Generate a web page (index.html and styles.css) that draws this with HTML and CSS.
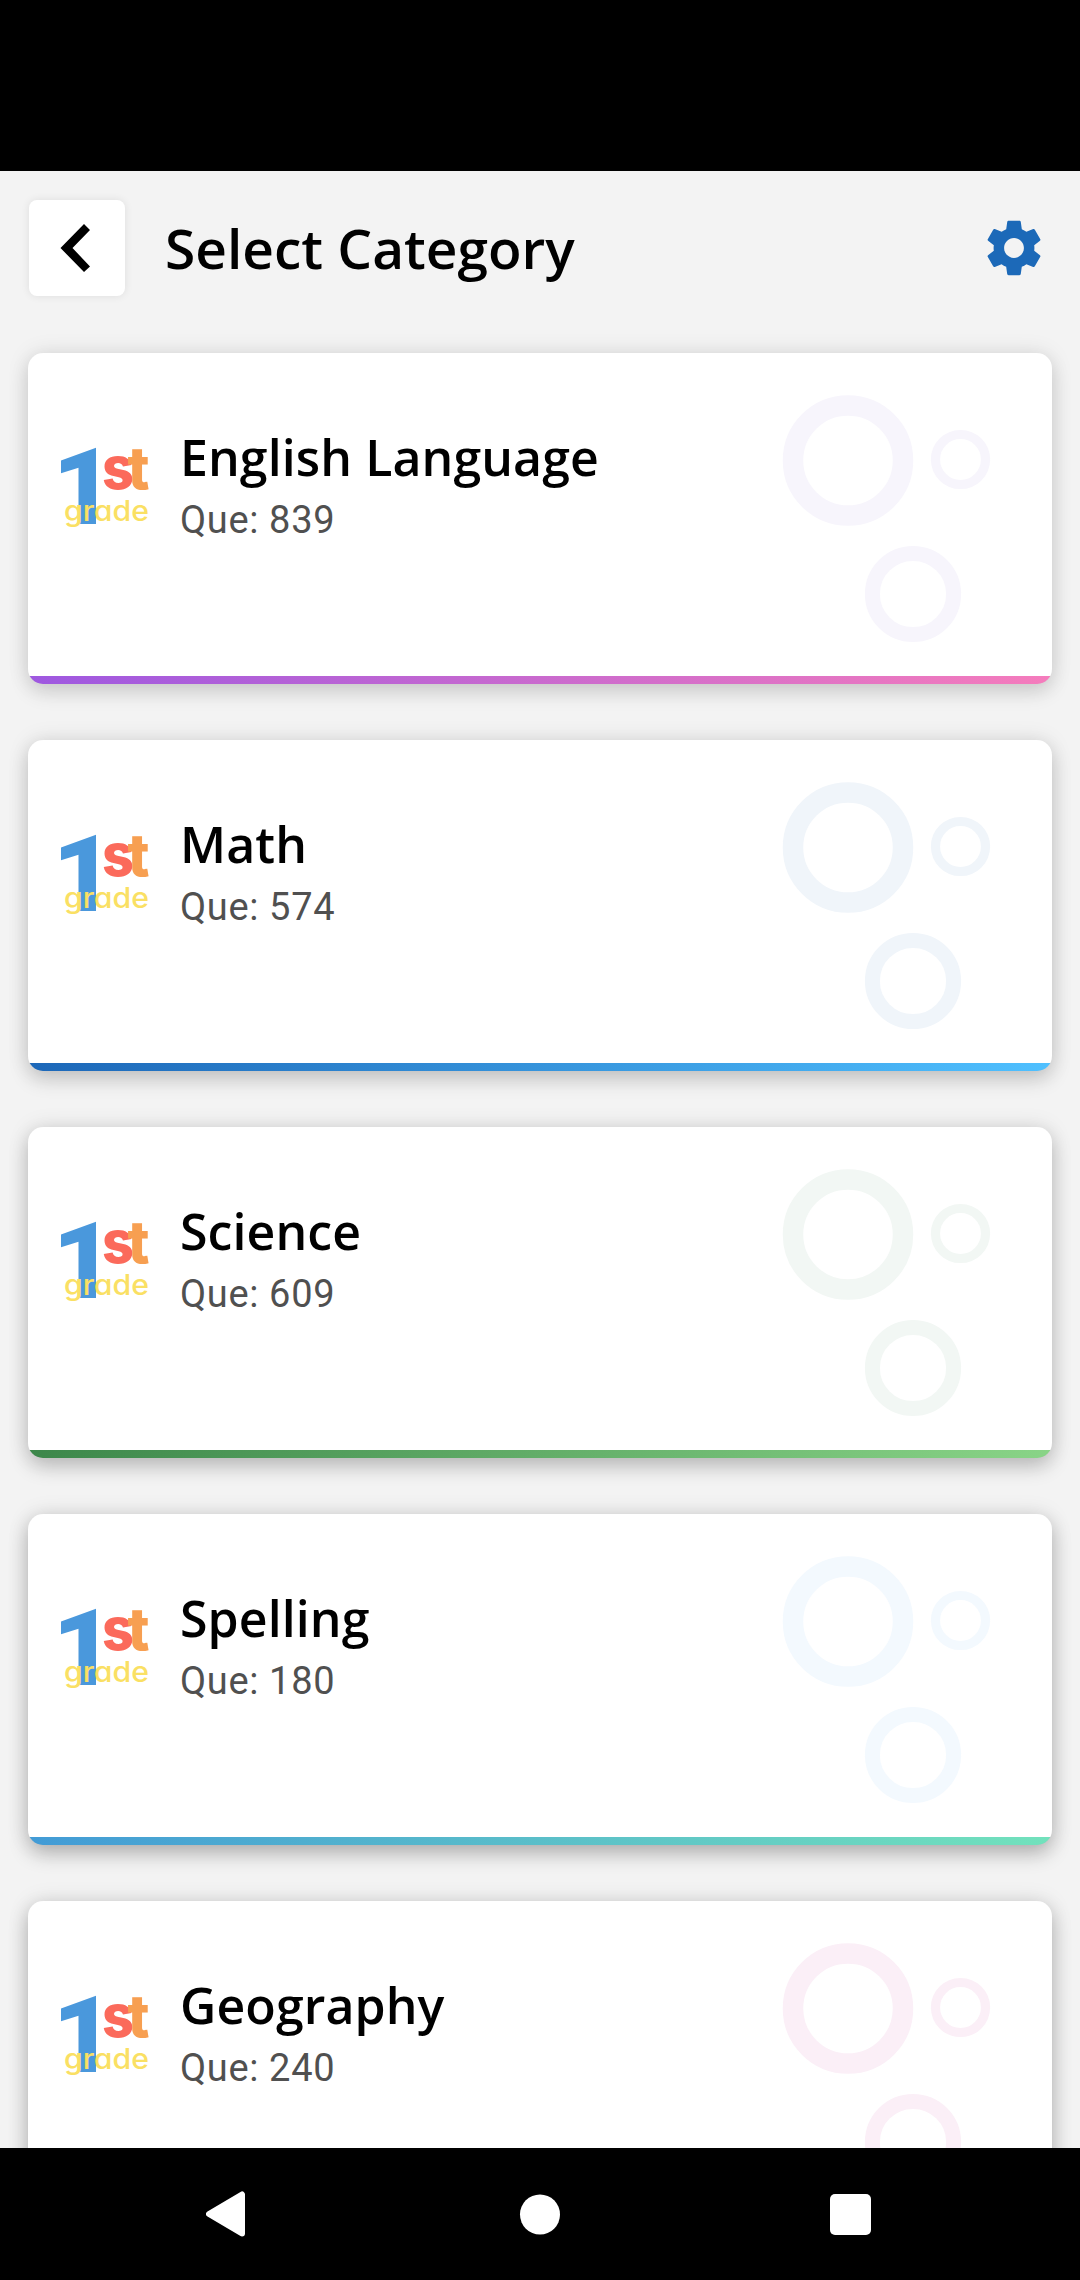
FILE: index.html
```html
<!DOCTYPE html>
<html lang="en">
<head>
<meta charset="utf-8">
<title>Select Category</title>
<link rel="stylesheet" href="styles.css">
</head>
<body>
<svg width="0" height="0" class="defs">
  <symbol id="rings" viewBox="0 0 210 250">
    <g fill="none" stroke="currentColor">
      <circle cx="66" cy="65.500" r="55" stroke-width="20.500"/>
      <circle cx="178.500" cy="64.500" r="25" stroke-width="9.200"/>
      <circle cx="131" cy="199" r="40.600" stroke-width="15"/>
    </g>
  </symbol>
</svg>
<div class="screen">
  <div class="status"></div>
  <header class="bar">
    <div class="back"><svg width="30" height="48" viewBox="0 0 30 48"><path d="M24 0 30 6 12.500 24 30 42.500 24 48 .5 24Z"/></svg></div>
    <h1>Select Category</h1>
    <svg class="gear" width="68" height="68" viewBox="0 0 24 24"><path fill="#1c69b8" d="M19.140 12.940c.04-.3.06-.61.06-.94 0-.32-.02-.64-.07-.94l2.030-1.580c.18-.14.23-.41.12-.61l-1.920-3.320c-.12-.22-.37-.29-.59-.22l-2.390.96c-.5-.38-1.030-.7-1.620-.94l-.36-2.540c-.04-.24-.24-.41-.48-.41h-3.840c-.24 0-.43.17-.47.41l-.36 2.540c-.59.24-1.130.57-1.620.94l-2.390-.96c-.22-.08-.47 0-.59.22L2.740 8.870c-.12.21-.08.47.12.61l2.030 1.580c-.05.3-.09.63-.09.94s.02.64.07.94l-2.030 1.580c-.18.14-.23.41-.12.61l1.920 3.320c.12.22.37.29.59.22l2.390-.96c.5.38 1.030.7 1.620.94l.36 2.540c.05.24.24.41.48.41h3.840c.24 0 .44-.17.47-.41l.36-2.540c.59-.24 1.130-.56 1.620-.94l2.390.96c.22.08.47 0 .59-.22l1.920-3.320c.12-.22.07-.47-.12-.61l-2.010-1.580zM12 15.500c-1.930 0-3.500-1.570-3.500-3.500s1.570-3.500 3.500-3.500 3.500 1.570 3.500 3.500-1.570 3.500-3.500 3.500z"/></svg>
  </header>
  <main class="list">
    <section class="card purple">
      <svg class="logo" viewBox="0 0 96 86"><path d="M4 15.500 39 2.700V79H21.500V22.800L4 28.200Z"/><text x="45" y="43.500" class="logo-s" textLength="32" lengthAdjust="spacingAndGlyphs">s</text><text x="70.500" y="43.500" class="logo-t" textLength="22" lengthAdjust="spacingAndGlyphs">t</text><text x="7" y="75.500" class="logo-grade" textLength="85" lengthAdjust="spacingAndGlyphs">grade</text></svg>
      <div class="info"><h2>English Language</h2><p>Que: 839</p></div>
      <svg class="rings"><use href="#rings"/></svg>
    </section>
    <section class="card blue">
      <svg class="logo" viewBox="0 0 96 86"><path d="M4 15.500 39 2.700V79H21.500V22.800L4 28.200Z"/><text x="45" y="43.500" class="logo-s" textLength="32" lengthAdjust="spacingAndGlyphs">s</text><text x="70.500" y="43.500" class="logo-t" textLength="22" lengthAdjust="spacingAndGlyphs">t</text><text x="7" y="75.500" class="logo-grade" textLength="85" lengthAdjust="spacingAndGlyphs">grade</text></svg>
      <div class="info"><h2>Math</h2><p>Que: 574</p></div>
      <svg class="rings"><use href="#rings"/></svg>
    </section>
    <section class="card green">
      <svg class="logo" viewBox="0 0 96 86"><path d="M4 15.500 39 2.700V79H21.500V22.800L4 28.200Z"/><text x="45" y="43.500" class="logo-s" textLength="32" lengthAdjust="spacingAndGlyphs">s</text><text x="70.500" y="43.500" class="logo-t" textLength="22" lengthAdjust="spacingAndGlyphs">t</text><text x="7" y="75.500" class="logo-grade" textLength="85" lengthAdjust="spacingAndGlyphs">grade</text></svg>
      <div class="info"><h2>Science</h2><p>Que: 609</p></div>
      <svg class="rings"><use href="#rings"/></svg>
    </section>
    <section class="card aqua">
      <svg class="logo" viewBox="0 0 96 86"><path d="M4 15.500 39 2.700V79H21.500V22.800L4 28.200Z"/><text x="45" y="43.500" class="logo-s" textLength="32" lengthAdjust="spacingAndGlyphs">s</text><text x="70.500" y="43.500" class="logo-t" textLength="22" lengthAdjust="spacingAndGlyphs">t</text><text x="7" y="75.500" class="logo-grade" textLength="85" lengthAdjust="spacingAndGlyphs">grade</text></svg>
      <div class="info"><h2>Spelling</h2><p>Que: 180</p></div>
      <svg class="rings"><use href="#rings"/></svg>
    </section>
    <section class="card pink">
      <svg class="logo" viewBox="0 0 96 86"><path d="M4 15.500 39 2.700V79H21.500V22.800L4 28.200Z"/><text x="45" y="43.500" class="logo-s" textLength="32" lengthAdjust="spacingAndGlyphs">s</text><text x="70.500" y="43.500" class="logo-t" textLength="22" lengthAdjust="spacingAndGlyphs">t</text><text x="7" y="75.500" class="logo-grade" textLength="85" lengthAdjust="spacingAndGlyphs">grade</text></svg>
      <div class="info"><h2>Geography</h2><p>Que: 240</p></div>
      <svg class="rings"><use href="#rings"/></svg>
    </section>
  </main>
  <nav class="nav">
    <svg width="40" height="46" viewBox="0 0 40 46"><path d="M3 23 36 3.500V42.500Z" fill="#fff" stroke="#fff" stroke-width="6" stroke-linejoin="round"/></svg>
    <svg width="43" height="41" viewBox="0 0 43 41"><circle cx="23" cy="20.500" r="20" fill="#fff"/></svg>
    <svg width="41" height="41" viewBox="0 0 41 41"><rect width="41" height="41" rx="5" fill="#fff"/></svg>
  </nav>
</div>
</body>
</html>
```
FILE: styles.css
```css
* { box-sizing: border-box; }
body { margin: 0; background: #000; }
h1, h2, p { margin: 0; white-space: nowrap; }
svg { display: block; flex: none; }
.defs { position: absolute; }
.screen {
  width: 1080px;
  height: 2280px;
  display: flex;
  flex-direction: column;
  overflow: hidden;
  background: #f3f3f3;
}
.status { height: 171px; flex: none; background: #000; }
.bar {
  height: 154px;
  flex: none;
  display: flex;
  align-items: center;
  padding: 0 32px 0 29px;
}
.back {
  width: 96px;
  height: 96px;
  display: flex;
  align-items: center;
  justify-content: center;
  padding-right: 4px;
  border-radius: 8px;
  background: #fff;
  box-shadow: 0 0 8px rgba(0, 0, 0, .09);
}
h1 {
  margin-left: 40px;
  padding-bottom: 1px;
  font: 600 55px/72px "Open Sans", sans-serif;
  color: #000;
}
.gear { margin-left: auto; }
.list {
  flex: 1;
  min-height: 0;
  overflow: hidden;
  display: flex;
  flex-direction: column;
  gap: 56px;
  padding: 28px 28px 0;
}
.card {
  height: 331px;
  flex: none;
  display: flex;
  align-items: flex-start;
  border-radius: 15px;
  background: linear-gradient(90deg, var(--from), var(--to)) bottom / 100% 8px no-repeat, #fff;
  box-shadow: 0 9px 20px rgba(0, 0, 0, var(--shade)), 0 0 22px rgba(0, 0, 0, .1);
}
.purple { --from: #9e58e0; --to: #f57cbc; --ring: #f7f5fc; --shade: .12; }
.blue { --from: #1c67b8; --to: #4fc0ff; --ring: #f0f5fa; --shade: .16; }
.green { --from: #3c874a; --to: #89d487; --ring: #f2f7f4; --shade: .2; }
.aqua { --from: #429bd6; --to: #72e2bc; --ring: #f3f9fe; --shade: .24; }
.pink { --from: #e859a8; --to: #f7a1cc; --ring: #fbeff7; --shade: .24; }
.logo {
  width: 96px;
  height: 86px;
  margin: 92px 0 0 29px;
  overflow: visible;
  fill: #4a98dc;
}
.logo-s, .logo-t { font: 800 59px Inter, sans-serif; }
.logo-s { fill: #fb6a5b; }
.logo-t { fill: #f79f51; }
.logo-grade {
  font: 500 28px Inter, sans-serif;
  font-feature-settings: "cv11";
  fill: #fae063;
}
.info { margin: 70px 0 0 26px; }
h2 {
  padding-left: 1px;
  font: 600 50px/68px "Open Sans", sans-serif;
  letter-spacing: .1px;
  color: #000;
}
p {
  padding: 3px 0 0 1px;
  font: 400 38px/52px Roboto, sans-serif;
  letter-spacing: .65px;
  color: #505050;
}
.rings {
  width: 210px;
  height: 250px;
  margin: 42px 60px 0 auto;
  color: var(--ring);
}
.nav {
  height: 132px;
  flex: none;
  display: flex;
  align-items: center;
  justify-content: space-between;
  padding: 0 209px 0 206px;
  background: #000;
}
```
